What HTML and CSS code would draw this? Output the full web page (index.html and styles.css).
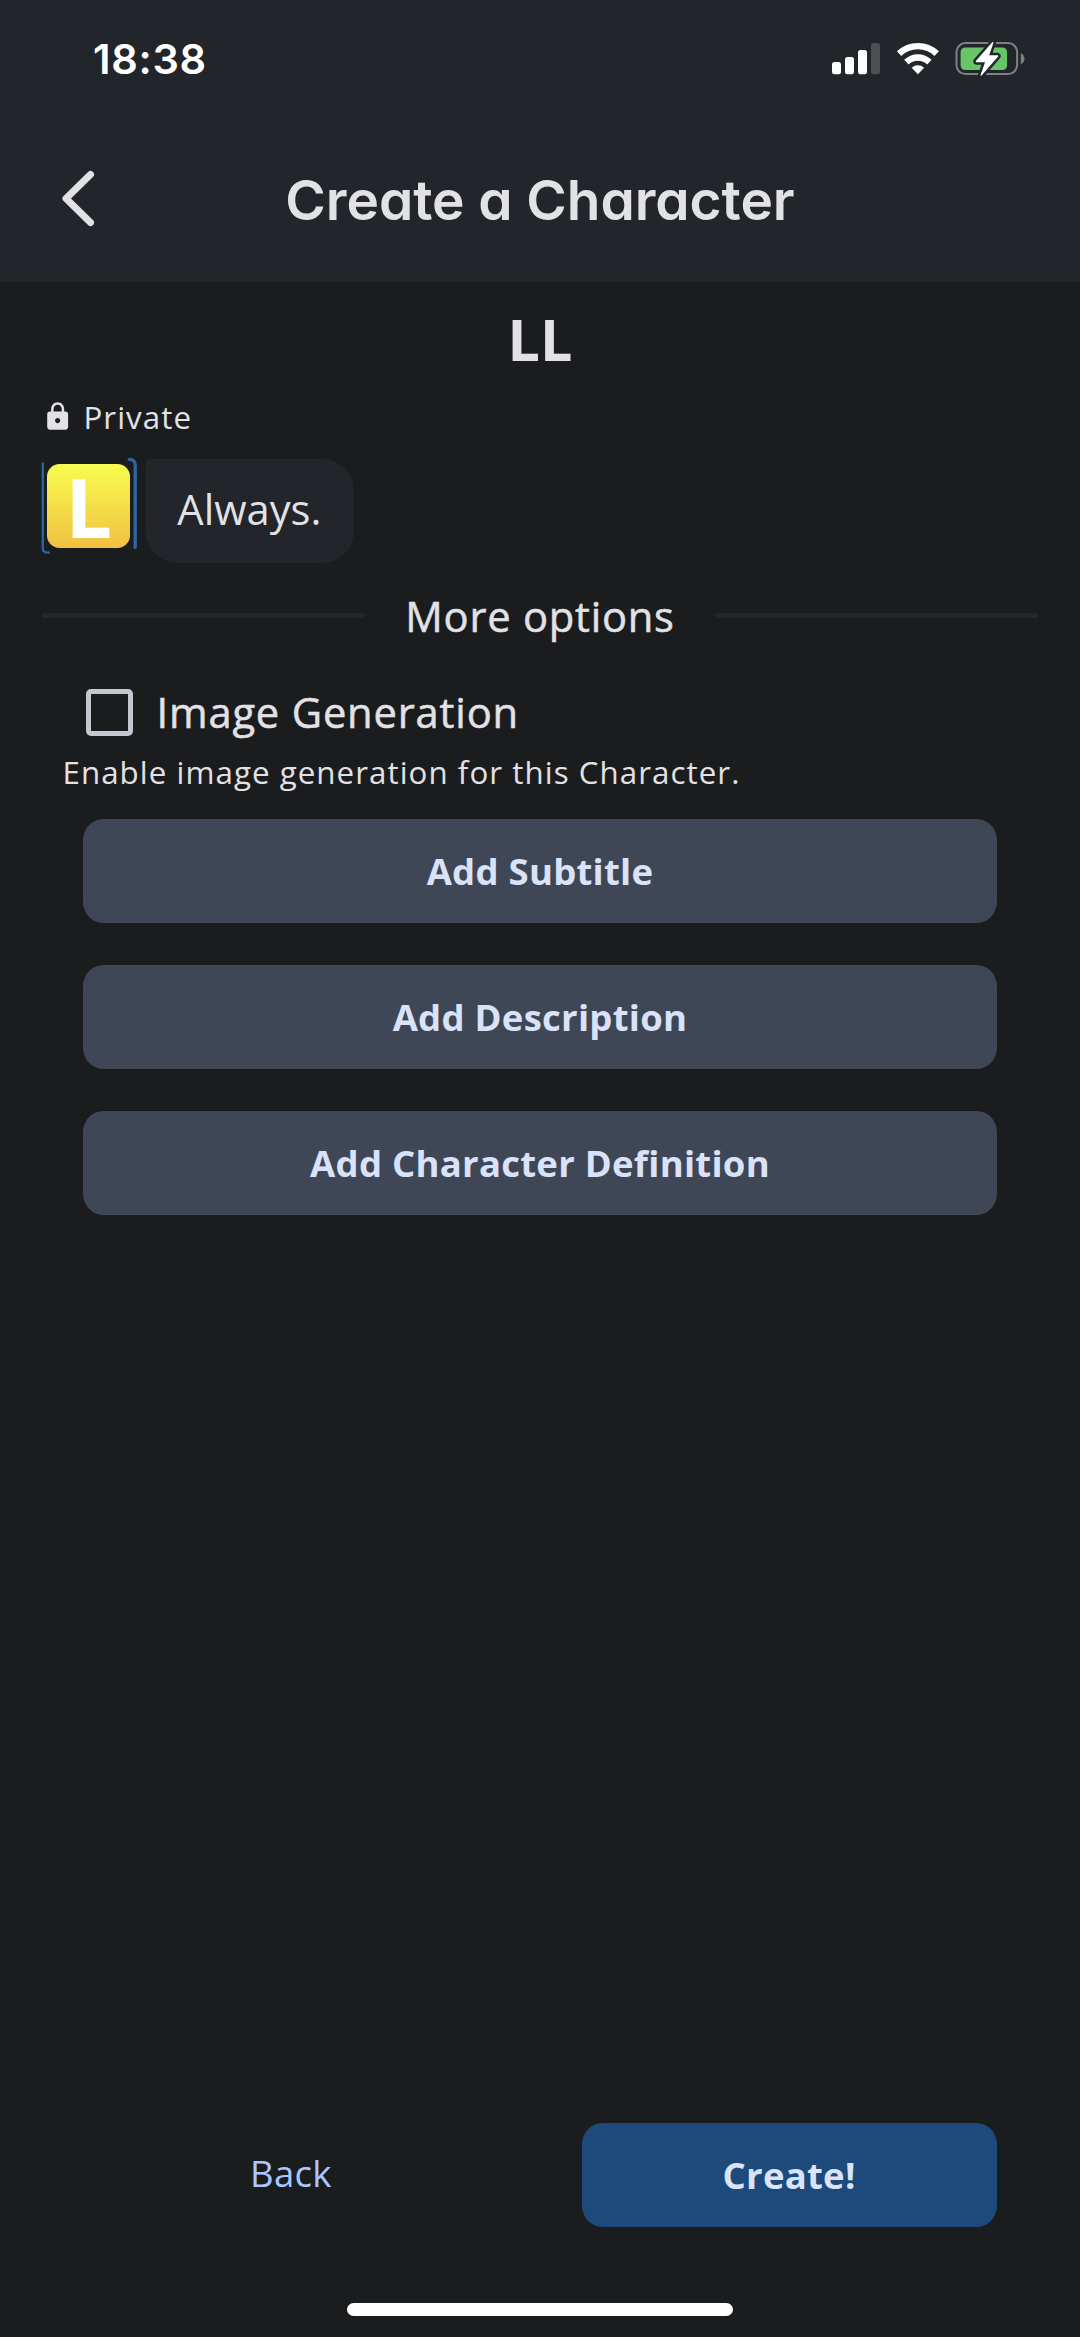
FILE: index.html
```html
<!DOCTYPE html>
<html lang="en">
<head>
<meta charset="utf-8">
<title>Create a Character</title>
<link rel="stylesheet" href="styles.css">
</head>
<body>
<div class="screen">
  <header class="header">
    <div class="status">
      <span class="time">18:38</span>
      <svg class="status-icons" width="194" height="36" viewBox="831 41 194 36" fill="#fff">
        <rect x="832" y="62" width="9" height="12.3" rx="2.5"/>
        <rect x="845" y="57" width="9" height="17.3" rx="2.5"/>
        <rect x="858" y="50" width="9" height="24.3" rx="2.5"/>
        <rect x="871" y="43" width="9" height="31.3" rx="2.5" fill="#4e4f53"/>
        <g fill="none" stroke="#fff" stroke-width="6.4">
          <path d="M899.1 53.6a27.3 27.3 0 0 1 37.6 0"/>
          <path d="M906.4 62.1a16.5 16.5 0 0 1 23 0"/>
        </g>
        <path d="M917.9 74.3l-6.2-6.6a9.3 9.3 0 0 1 12.4 0z"/>
        <rect x="956.5" y="43.1" width="60.6" height="31" rx="9" fill="none" stroke="#7e8083" stroke-width="2"/>
        <path d="M1020.8 53c4.8 2.3 4.8 9 0 11.3z" fill="#7e8083"/>
        <rect x="960.6" y="47.4" width="46.5" height="22.6" rx="4.5" fill="#67c567"/>
        <path d="M992.2 42.3L976 60.8c-.6.8-.2 1.500.7 1.500h8.300l-4.400 12.400c-.3.9.6 1.300 1.200.6l16.200-18.600c.6-.8.2-1.500-.7-1.500h-8.100l4.200-12.300c.3-.9-.6-1.300-1.200-.6z" stroke="#22252a" stroke-width="5" paint-order="stroke"/>
      </svg>
    </div>
    <div class="appbar">
      <svg class="chevron" width="36" height="60" viewBox="60 168 36 60" fill="none" stroke="#e2e2e6" stroke-width="7" stroke-linecap="round" stroke-linejoin="round"><path d="M90.500 174.500L66 198.600l24.500 24"/></svg>
      <h1 class="title">Create a Character</h1>
    </div>
  </header>

  <main class="content">
    <h2 class="name">LL</h2>
    <div class="visibility">
      <svg width="31.3" height="31.3" viewBox="0 0 24 24" fill="#e2e2e6"><path d="M18 8h-1V6c0-2.760-2.240-5-5-5S7 3.240 7 6v2H6c-1.100 0-2 .9-2 2v10c0 1.100.9 2 2 2h12c1.100 0 2-.9 2-2V10c0-1.100-.9-2-2-2zm-6 9c-1.100 0-2-.9-2-2s.9-2 2-2 2 .9 2 2-.9 2-2 2zM15.100 8H8.900V6c0-1.710 1.390-3.100 3.100-3.100s3.100 1.390 3.100 3.100v2z"/></svg>
      <span>Private</span>
    </div>
    <div class="chat">
      <div class="avatar">
        <span class="avatar-tile">L</span>
        <svg class="avatar-frame" width="97" height="98" viewBox="41 457 97 98" fill="none" stroke="#2f65a3" stroke-linecap="round">
          <path d="M42.800 463.500v85q0 4.500 6 4" stroke-width="2.300"/>
          <path d="M129.200 459.300q6 0 6 6V547.500" stroke-width="3.300"/>
        </svg>
      </div>
      <p class="bubble">Always.</p>
    </div>
    <div class="divider"><span>More options</span></div>
    <label class="option">
      <span class="checkbox"></span>
      <span>Image Generation</span>
    </label>
    <p class="hint">Enable image generation for this Character.</p>
    <div class="actions">
      <button class="btn">Add Subtitle</button>
      <button class="btn">Add Description</button>
      <button class="btn">Add Character Definition</button>
    </div>
  </main>

  <footer class="footer">
    <div class="nav">
      <button class="btn btn-text">Back</button>
      <button class="btn btn-primary">Create!</button>
    </div>
    <div class="home-indicator"></div>
  </footer>
</div>
</body>
</html>
```

FILE: styles.css
```css
* { box-sizing: border-box; margin: 0; }

body {
  background: #1b1c1e;
  color: #e2e2e6;
  font-family: "Open Sans", "Noto Sans", sans-serif;
}

.screen {
  display: flex;
  flex-direction: column;
  width: 1080px;
  height: 2337px;
}

.header { height: 282px; background: #22252a; }

.status {
  display: flex;
  justify-content: space-between;
  align-items: center;
  height: 118px;
  padding: 0 55px 0 93px;
}

.time {
  color: #fff;
  font: 600 41.5px/50px Inter, sans-serif;
  letter-spacing: 0.7px;
}

.appbar {
  display: grid;
  grid-template-columns: 36px 1fr 36px;
  align-items: center;
  height: 164px;
  padding: 0 60px;
}

.chevron { margin-bottom: 4px; }

.title {
  font: 600 55px/70px Inter, sans-serif;
  font-feature-settings: "cv11";
  letter-spacing: -0.05px;
  text-align: center;
  white-space: nowrap;
}

.content { padding: 20px 41.7px 0; }

.name {
  font-size: 57.4px;
  font-weight: 700;
  line-height: 74px;
  text-align: center;
}

.visibility {
  display: flex;
  align-items: center;
  gap: 10.5px;
  height: 42px;
  margin-top: 20px;
  font-size: 31.3px;
  line-height: 42px;
  letter-spacing: 1.04px;
}

.chat {
  display: flex;
  align-items: flex-start;
  gap: 8px;
  height: 107px;
  margin-top: 19px;
}

.avatar {
  position: relative;
  width: 96.3px;
  height: 98px;
  padding: 7px 0 0 5.3px;
}

.avatar-tile {
  display: block;
  width: 83.5px;
  height: 83.7px;
  border-radius: 12.5px;
  background: linear-gradient(#f7fc4e, #f1c143);
  color: #fff;
  font-size: 83px;
  font-weight: 700;
  line-height: 84px;
  text-align: center;
}

.avatar-frame { position: absolute; left: -0.7px; top: 0; }

.bubble {
  height: 104.3px;
  margin-top: 2px;
  padding: 0 32.5px 0 31.3px;
  border-radius: 2.6px 31.3px 31.3px 31.3px;
  background: #22252a;
  font-size: 41.7px;
  line-height: 100px;
}

.divider {
  display: flex;
  align-items: center;
  gap: 41.7px;
  height: 57px;
  margin-top: 23px;
  font-size: 41.7px;
  line-height: 57px;
  letter-spacing: 0.75px;
  -webkit-text-stroke: 0.5px currentColor;
}

.divider::before,
.divider::after {
  content: "";
  flex: 1;
  height: 5.2px;
  background: #25262c;
}

.option {
  display: flex;
  align-items: center;
  gap: 23.5px;
  height: 63px;
  margin: 36.5px 0 0 44.3px;
  font-size: 41.7px;
  line-height: 62px;
  letter-spacing: 0.83px;
  -webkit-text-stroke: 0.5px currentColor;
}

.checkbox {
  width: 47px;
  height: 47px;
  border: 5.2px solid #c4c6d0;
  border-radius: 5px;
}

.hint {
  margin: 7.5px 0 0 20.8px;
  font-size: 31.3px;
  line-height: 42px;
  letter-spacing: 1.04px;
}

.actions {
  display: grid;
  gap: 41.7px;
  margin: 26px 41.7px 0;
}

.btn {
  height: 104.3px;
  padding: 1px 0 0;
  border: 0;
  border-radius: 20.9px;
  background: #3f4756;
  color: #dae2f9;
  font: 700 36.5px/103px "Open Sans", "Noto Sans", sans-serif;
  letter-spacing: 0.26px;
}

.footer {
  display: flex;
  flex-direction: column;
  justify-content: space-between;
  align-items: center;
  height: 214px;
  margin-top: auto;
  padding-bottom: 20.7px;
}

.nav {
  display: grid;
  grid-template-columns: 1fr 1fr;
  gap: 83.4px;
  width: 913px;
}

.btn-text {
  padding: 0 0 4px;
  background: none;
  color: #a9c7ff;
  font-weight: 400;
  line-height: 100px;
}

.btn-primary { background: #1d497b; color: #d9e3f9; }

.home-indicator {
  width: 386px;
  height: 13.3px;
  border-radius: 7px;
  background: #fff;
}
```
